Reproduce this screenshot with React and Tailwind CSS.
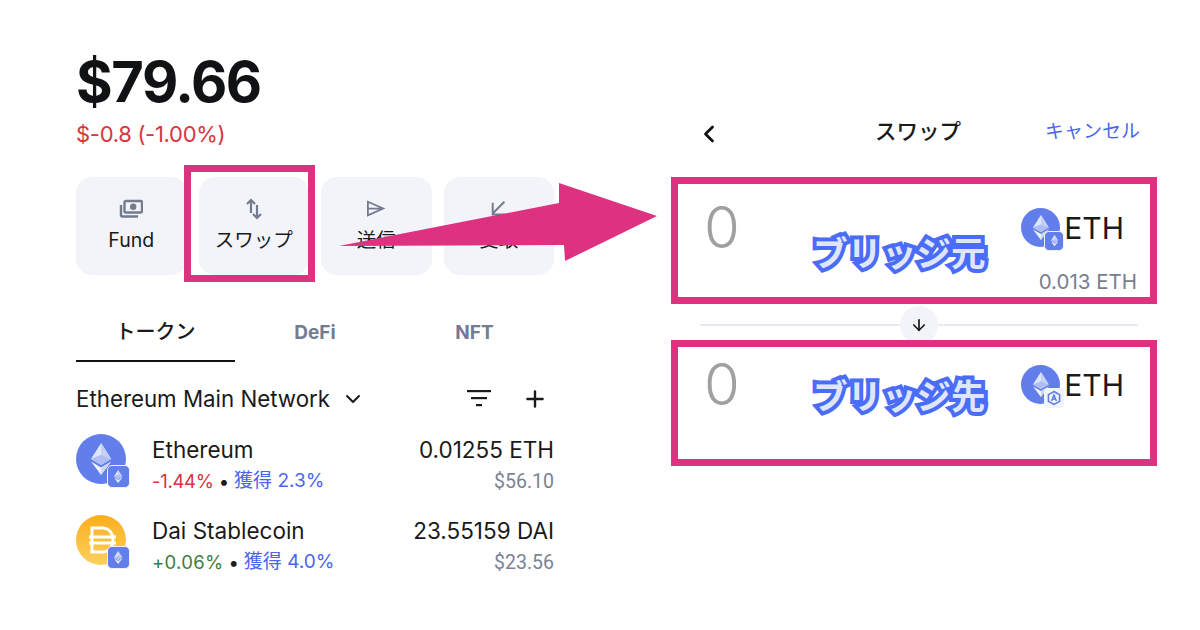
import React from "react";
import { ChevronDown, ChevronLeft, ArrowDown, Plus } from "lucide-react";

const FONT = "font-['Inter','Noto_Sans_CJK_JP',sans-serif]";

const EthMark = ({ className }) => (
  <svg viewBox="0 0 24 38" className={className}>
    <path d="M12 0 L24 19 L12 26 L0 19 Z" fill="#dfe6fb" />
    <path d="M12 0 L24 19 L12 14 Z" fill="#c5d0f7" />
    <path d="M12 14 L24 19 L12 26 L0 19 Z" fill="#aebef5" />
    <path d="M12 29 L24 22 L12 38 L0 22 Z" fill="#f0f3fe" />
    <path d="M12 29 L24 22 L12 38 Z" fill="#ccd6f9" />
  </svg>
);

const ChainBadge = ({ className }) => (
  <div className={`absolute flex items-center justify-center bg-[#627eea] border border-[#eef0fa] rounded-[5px] ${className}`}>
    <EthMark className="h-[62%]" />
  </div>
);

const ArbBadge = () => (
  <div className="absolute right-[-4px] bottom-[-4px] w-[20px] h-[20px] flex items-center justify-center bg-[#f1f3fa] rounded-[4px]">
    <svg viewBox="0 0 16 16" className="w-[16px] h-[16px]">
      <path d="M8 1.5 L13.6 4.7 V11.3 L8 14.5 L2.4 11.3 V4.7 Z" fill="none" stroke="#5b79e6" strokeWidth="1.5" />
      <path d="M5.6 11 L8 5 L10.4 11 M6.5 9 H9.5" fill="none" stroke="#5b79e6" strokeWidth="1.4" />
    </svg>
  </div>
);

const MoneyIcon = () => (
  <svg viewBox="0 0 24 20" className="w-[24px] h-[20px]" fill="none" stroke="#737b8e">
    <rect x="5.5" y="2" width="17.5" height="11.5" rx="1.5" strokeWidth="2.4" />
    <circle cx="14.2" cy="7.8" r="3.2" fill="#737b8e" stroke="none" />
    <path d="M2 6 V16 A1.5 1.5 0 0 0 3.5 17.5 H19" strokeWidth="2.4" />
  </svg>
);

const SwapIcon = () => (
  <svg viewBox="0 0 16 22" className="w-[16px] h-[22px]" fill="none" stroke="#737b8e" strokeWidth="2.2">
    <path d="M5 15 V2 M1 6 L5 2 L9 6" />
    <path d="M11 7 V20 M7 16 L11 20 L15 16" />
  </svg>
);

const SendIcon = () => (
  <svg viewBox="0 0 22 20" className="w-[20px] h-[18px]" fill="none" stroke="#737b8e" strokeWidth="2">
    <path d="M2 2 L19 9.5 L2 17 Z M2 9.5 H19" />
  </svg>
);

const ReceiveIcon = () => (
  <svg viewBox="0 0 20 20" className="w-[18px] h-[18px]" fill="none" stroke="#737b8e" strokeWidth="2.2">
    <path d="M16 2 L3 15 M3 3 V16 H16" />
  </svg>
);

const FilterIcon = () => (
  <svg viewBox="0 0 24 18" className="w-[24px] h-[18px]" fill="#1a1a1a">
    <rect x="0" y="0" width="24" height="2.2" />
    <rect x="4" y="7" width="16" height="2.2" />
    <rect x="9" y="14" width="6" height="2.2" />
  </svg>
);

const DaiIcon = () => (
  <svg viewBox="0 0 50 50" className="w-[50px] h-[50px]">
    <defs>
      <linearGradient id="dai" x1="0" y1="0" x2="0" y2="1">
        <stop offset="0" stopColor="#fbae1c" />
        <stop offset="1" stopColor="#fdd05f" />
      </linearGradient>
    </defs>
    <circle cx="25" cy="25" r="25" fill="url(#dai)" />
    <path d="M16 13 H26 C33 13 37 18 37 25 C37 32 33 37 26 37 H16 Z" fill="none" stroke="#fff" strokeWidth="3" />
    <path d="M13 22 H40 M13 28 H40" stroke="#fff" strokeWidth="3" />
  </svg>
);

const ActionButton = ({ icon, label, children }) => (
  <div className="relative flex-1 h-[98px] flex flex-col items-center pt-[20px] bg-[#f3f4fa] rounded-[16px]">
    <div className="h-[24px] flex items-center justify-center">{icon}</div>
    <span className="mt-[6px] text-[19.5px] leading-[26px] text-[#1a1a1a]">{label}</span>
    {children}
  </div>
);

const TokenRow = ({ icon, name, change, changeColor, earn, amount, usd }) => (
  <div className="flex h-[50px] items-stretch">
    <div className="relative w-[50px] h-[50px]">
      {icon}
      <ChainBadge className="right-[-4px] bottom-[-4px] w-[23px] h-[23px]" />
    </div>
    <div className="ml-[26px] flex-1 flex flex-col">
      <span className="text-[22.5px] leading-[32px] text-[#1a1a1a]">{name}</span>
      <div className="mt-[2px] flex items-center text-[18.5px] leading-[26px]">
        <span className={changeColor}>{change}</span>
        <span className="mx-[5px] text-[#1a1a1a]">•</span>
        <span className="text-[19px] text-[#4a66f0]">{earn}</span>
      </div>
    </div>
    <div className="flex flex-col items-end">
      <span className="text-[22.5px] leading-[32px] text-[#1a1a1a]">{amount}</span>
      <span className="mt-[3px] font-['Roboto',sans-serif] text-[19.5px] leading-[26px] text-[#7b8294]">{usd}</span>
    </div>
  </div>
);

const PinkBox = ({ title, badge, balance, zeroTop, ethTop, titleTop }) => (
  <div className="relative h-full border-[7px] border-[#dd3280] flex justify-between">
    <span className={`ml-[26px] text-[58px] leading-[60px] font-light text-[#a0a0a0] ${zeroTop}`}>0</span>
    <div className="flex flex-col items-end mr-[13px]">
      <div className={`mr-[13px] flex items-center ${ethTop}`}>
        <div className="relative w-[39px] h-[39px] rounded-full bg-[#627eea] flex items-center justify-center">
          <EthMark className="h-[25px]" />
          {badge}
        </div>
        <span className="ml-[4px] text-[30px] leading-[38px] text-[#1a1a1a]">ETH</span>
      </div>
      {balance && <span className="mt-[22px] text-[20.5px] leading-[26px] text-[#777e8e]">{balance}</span>}
    </div>
    <span className={`absolute left-[135px] text-[34.5px] leading-[42px] font-bold font-['Noto_Sans_CJK_JP',sans-serif] text-[#dfe6fb] [-webkit-text-stroke:8px_#4a6cf7] [paint-order:stroke_fill] ${titleTop}`}>
      {title}
    </span>
  </div>
);

export default function App() {
  return (
    <div className={`relative w-[1200px] h-[630px] overflow-hidden bg-white flex ${FONT}`}>
      {/* left: wallet */}
      <div className="w-[478px] ml-[76px] pt-[50px]">
        <div className="h-[64px] text-[56px] leading-[64px] font-bold tracking-[-1.4px] text-[#111214]">$79.66</div>
        <div className="mt-[5px] h-[30px] text-[22px] leading-[30px] tracking-[-0.3px] text-[#d7353f]">$-0.8 (-1.00%)</div>

        <div className="mt-[28px] flex gap-[12px]">
          <ActionButton icon={<MoneyIcon />} label="Fund" />
          <ActionButton icon={<SwapIcon />} label="スワップ">
            <div className="absolute left-[-15px] right-[-6px] top-[-12px] bottom-[-7px] border-[7px] border-[#dd3280]" />
          </ActionButton>
          <ActionButton icon={<SendIcon />} label="送信" />
          <ActionButton icon={<ReceiveIcon />} label="受取" />
        </div>

        <div className="mt-[37px] flex h-[50px]">
          <div className="w-[159px] border-b-2 border-[#111214] text-center text-[20px] leading-[40px] text-[#1a1a1a] font-medium">トークン</div>
          <div className="w-[160px] text-center text-[19px] leading-[42px] font-bold text-[#737b8e]">DeFi</div>
          <div className="w-[159px] text-center text-[19px] leading-[42px] font-bold text-[#737b8e]">NFT</div>
        </div>

        <div className="mt-[24px] h-[26px] flex items-center">
          <span className="text-[22.3px] leading-[26px] text-[#1a1a1a]">Ethereum Main Network</span>
          <ChevronDown className="ml-[11px] w-[24px] h-[24px] text-[#1a1a1a]" strokeWidth={2} />
          <div className="ml-auto flex items-center gap-[31px]">
            <FilterIcon />
            <Plus className="w-[26px] h-[26px] mr-[6px] text-[#1a1a1a]" strokeWidth={2.2} />
          </div>
        </div>

        <div className="mt-[22px] flex flex-col gap-[31px]">
          <TokenRow
            icon={
              <div className="w-[50px] h-[50px] rounded-full bg-[#627eea] flex items-center justify-center">
                <EthMark className="h-[32px]" />
              </div>
            }
            name="Ethereum"
            change="-1.44%"
            changeColor="text-[#d7353f] tracking-[-0.3px]"
            earn="獲得 2.3%"
            amount="0.01255 ETH"
            usd="$56.10"
          />
          <TokenRow
            icon={<DaiIcon />}
            name="Dai Stablecoin"
            change="+0.06%"
            changeColor="text-[#3f7d3f] tracking-[0.3px]"
            earn="獲得 4.0%"
            amount="23.55159 DAI"
            usd="$23.56"
          />
        </div>
      </div>

      {/* right: swap */}
      <div className="w-[486px] ml-[117px] pt-[115px]">
        <div className="h-[32px] flex items-center relative">
          <ChevronLeft className="ml-[24px] mt-[6px] w-[28px] h-[28px] text-[#111214]" strokeWidth={2.4} />
          <span className="absolute left-[204px] text-[21.5px] font-medium text-[#1a1a1a]">スワップ</span>
          <span className="ml-auto mr-[17px] mt-[3px] text-[19px] text-[#4a66f0]">キャンセル</span>
        </div>
        <div className="mt-[30px] h-[127px]">
          <PinkBox
            title="ブリッジ元"
            balance="0.013 ETH"
            zeroTop="mt-[13px]"
            ethTop="mt-[24px]"
            titleTop="top-[46px]"
            badge={<ChainBadge className="right-[-4px] bottom-[-4px] w-[20px] h-[20px]" />}
          />
        </div>
        <div className="h-[36px] relative flex items-start pt-[20px] pl-[29px] pr-[19px]">
          <div className="w-full h-[2px] bg-[#e8e9f1]" />
          <div className="absolute left-[229px] top-[2px] w-[38px] h-[38px] rounded-full bg-[#f3f4fa] flex items-center justify-center">
            <ArrowDown className="w-[18px] h-[18px] text-[#111214]" strokeWidth={2.2} />
          </div>
        </div>
        <div className="h-[126px] relative">
          <PinkBox
            title="ブリッジ先"
            zeroTop="mt-[7px]"
            ethTop="mt-[18px]"
            titleTop="top-[26px]"
            badge={<ArbBadge />}
          />
        </div>
      </div>

      {/* arrow laid over both columns */}
      <svg className="absolute left-0 top-0 pointer-events-none" width="1200" height="630">
        <polygon points="339,246 559,203 559,183 657,216 565,261 564,245" fill="#dd3280" />
      </svg>
    </div>
  );
}
